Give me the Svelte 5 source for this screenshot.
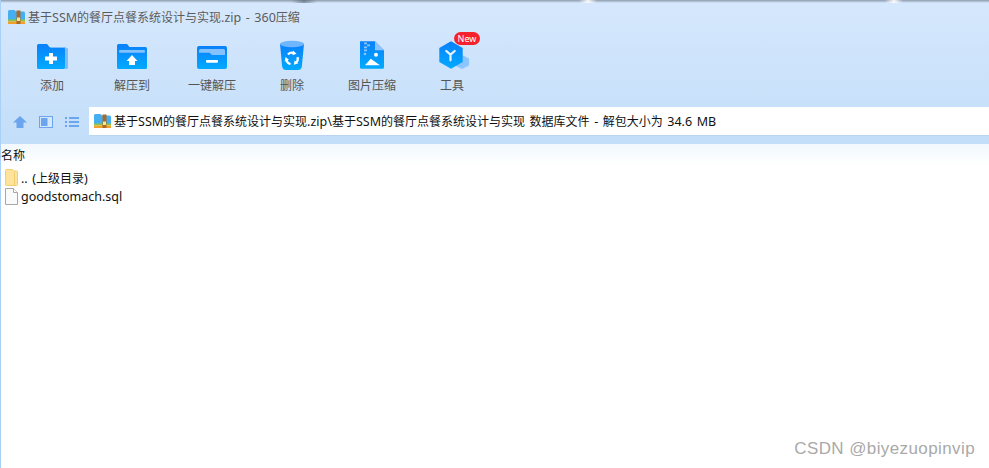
<script>
    const tools = [
        { name: "添加", icon: "add" },
        { name: "解压到", icon: "extract" },
        { name: "一键解压", icon: "onekey" },
        { name: "删除", icon: "trash" },
        { name: "图片压缩", icon: "image" },
        { name: "工具", icon: "tools" }
    ];
    const title = "基于SSM的餐厅点餐系统设计与实现.zip";

    // latin runs are drawn a little larger than the cjk ones
    const runs = (text) => text.split(/([\x00-\x7f]+)/).filter(Boolean);
    const isLatin = (run) => /^[\x00-\x7f]/.test(run);
</script>

{#snippet mixed(text)}
    {#each runs(text) as run}<span class:latin={isLatin(run)}>{run}</span>{/each}
{/snippet}

{#snippet zipIcon()}
    <svg class="zip" width="17" height="14" viewBox="0 0 17 14">
        <path d="M0 1.500a1.500 1.500 0 0 1 1.500-1.500h5l1.500 1.500h7.500a1.500 1.500 0 0 1 1.500 1.500v7h-17z" fill="#45aff2"/>
        <rect x="0" y="9.500" width="17" height="2" fill="#8cc63f"/>
        <rect x="0" y="11.500" width="17" height="2.500" fill="#f2a02c"/>
        <rect x="8.500" y="0.500" width="4" height="13.500" fill="#a8692b"/>
        <rect x="9" y="7.500" width="3" height="3.500" fill="#ffe28a"/>
    </svg>
{/snippet}

{#snippet toolIcon(icon)}
    <svg width="40" height="34" viewBox="0 0 40 34">
        <defs>
            <linearGradient id="blue-{icon}" x1="0" y1="0" x2="0" y2="1">
                <stop offset="0" stop-color="#0a80fb"/>
                <stop offset="1" stop-color="#00aaff"/>
            </linearGradient>
        </defs>
        {#if icon === "add"}
            <path d="M33 8h2a1 1 0 0 1 1 1v18.500a1.500 1.500 0 0 1-1.500 1.500h-1.500z" fill="#7dbdfd"/>
            <path d="M5 5.500a1.500 1.500 0 0 1 1.500-1.500h8.500l2.500 3h15.500v20.500a1.500 1.500 0 0 1-1.500 1.500h-25a1.500 1.500 0 0 1-1.500-1.500z" fill="url(#blue-add)"/>
            <path d="M17.500 7h15.500a1.500 1.500 0 0 1 1.500 1.500h-2v-.5h-14z" fill="#7dbdfd"/>
            <path d="M17 13h4v3.500h4v4h-4v3.500h-4v-3.500h-4v-4h4z" fill="#fff"/>
        {:else if icon === "extract"}
            <path d="M5 5.500a1.500 1.500 0 0 1 1.500-1.500h8.500l2.500 3h16a1.500 1.500 0 0 1 1.500 1.500v19a1.500 1.500 0 0 1-1.500 1.500h-27a1.500 1.500 0 0 1-1.500-1.500z" fill="url(#blue-extract)"/>
            <rect x="7" y="10" width="26" height="2.700" rx="1" fill="#85c1fd"/>
            <path d="M20 15l5.500 6h-2.500v4h-6v-4h-2.500z" fill="#fff"/>
        {:else if icon === "onekey"}
            <rect x="5" y="6" width="30" height="23" rx="2" fill="url(#blue-onekey)"/>
            <path d="M7 10.500a1.500 1.500 0 0 1 1.500-1.500h23a1.500 1.500 0 0 1 1.500 1.500v4.500h-13l-2.500-2.300h-10.500z" fill="#85c1fd"/>
            <rect x="14" y="20" width="12" height="2.700" rx="1" fill="#fff"/>
        {:else if icon === "trash"}
            <path d="M8 4h24l-2.200 23a4 4 0 0 1-3.800 3h-12a4 4 0 0 1-3.800-3z" fill="url(#blue-trash)"/>
            <ellipse cx="20" cy="4" rx="12" ry="3.200" fill="#6fb6fc"/>
            {#each [0, 120, 240] as angle}
                <g transform="rotate({angle} 20 18.500)">
                    <path d="M16 14.500a5 5 0 0 1 5.500-1.500" fill="none" stroke="#fff" stroke-width="2.200"/>
                    <path d="M21 10.500l3.500 3.200-4 1.500z" fill="#fff"/>
                </g>
            {/each}
        {:else if icon === "image"}
            <path d="M9 1.300h14l9 9v17a1.500 1.500 0 0 1-1.500 1.500h-21a1.500 1.500 0 0 1-1.500-1.500v-25a1.500 1.500 0 0 1 1.500-1.500z" fill="url(#blue-image)"/>
            <path d="M23 1.300l9 9h-9z" fill="#8cc5fd"/>
            <path d="M12 2.500h3v1.700h-3zM15 4.500h3v1.700h-3zM12 6.500h3v1.700h-3zM12 9.500h3v1.700h-3z" fill="#8cc5fd"/>
            <circle cx="13" cy="14" r="1.300" fill="#8cc5fd"/>
            <circle cx="24" cy="14.700" r="2" fill="#fff"/>
            <path d="M13 25.300l5.700-6.600 9.300 6.600z" fill="#fff"/>
        {:else}
            <path d="M30 15l7 3.500v7l-7 3.500-7-3.500v-7z" fill="#8cc5fd"/>
            <path d="M19 1.300l11.700 6.800v13.800l-11.700 6.800-11.700-6.800v-13.800z" fill="url(#blue-tools)"/>
            <path d="M18.500 14.700v5.600M18.500 14.700l-4.200-3.700M18.500 14.700l4.200-3.700" fill="none" stroke="#e4f3ff" stroke-width="2.200" stroke-linecap="round"/>
        {/if}
    </svg>
{/snippet}

<div class="window">
    <header class="chrome">
        <div class="topedge"></div>
        <div class="titlebar">
            {@render zipIcon()}
            <span>{@render mixed(`${title} - 360压缩`)}</span>
        </div>
        <div class="toolbar">
            {#each tools as tool}
                <div class="tool">
                    <div class="tool-icon">
                        {@render toolIcon(tool.icon)}
                        {#if tool.icon === "tools"}
                            <span class="badge">New</span>
                        {/if}
                    </div>
                    <span class="tool-name">{tool.name}</span>
                </div>
            {/each}
        </div>
        <div class="navbar">
            <div class="nav-buttons">
                <svg width="14" height="12" viewBox="0 0 14 12">
                    <path d="M7 0l7 6.500h-3.500v5.500h-7v-5.500h-3.500z" fill="#6ba5ef"/>
                </svg>
                <svg width="14" height="12" viewBox="0 0 14 12">
                    <rect x="0.500" y="0.500" width="13" height="11" fill="#d5e7fb" stroke="#6ba5ef"/>
                    <rect x="2" y="2" width="6.500" height="8" fill="#6ba5ef"/>
                </svg>
                <svg width="14" height="10" viewBox="0 0 14 10">
                    <path d="M0 0h2v2h-2zM4 0h10v2h-10zM0 4h2v2h-2zM4 4h10v2h-10zM0 8h2v2h-2zM4 8h10v2h-10z" fill="#6ba5ef"/>
                </svg>
            </div>
            <div class="address">
                {@render zipIcon()}
                <span>{@render mixed(`${title}\\基于SSM的餐厅点餐系统设计与实现 数据库文件 - 解包大小为 34.6 MB`)}</span>
            </div>
        </div>
    </header>

    <main class="files">
        <div class="column-head">名称</div>
        <div class="rows">
            <div class="row">
                <svg width="13" height="17" viewBox="0 0 13 17">
                    <path d="M0.500 1.500a1 1 0 0 1 1-1h6l1.500 1.500h2.500a1 1 0 0 1 1 1v12.500a1 1 0 0 1-1 1h-10a1 1 0 0 1-1-1z" fill="#fde49a" stroke="#f3cf74"/>
                    <path d="M9.500 2.500v14" stroke="#f3cf74"/>
                </svg>
                <span>{@render mixed(".. (上级目录)")}</span>
            </div>
            <div class="row">
                <svg width="13" height="17" viewBox="0 0 13 17">
                    <path d="M0.500 0.500h8l4 4v12h-12z" fill="#fafafa" stroke="#a8a8a8"/>
                    <path d="M8.500 0.500v4h4" fill="#fff" stroke="#a8a8a8"/>
                </svg>
                <span>{@render mixed("goodstomach.sql")}</span>
            </div>
        </div>
    </main>

    <div class="watermark">CSDN @biyezuopinvip</div>
</div>

<style>
    :global(body) {
        margin: 0;
        background: #fff;
    }

    .window {
        position: relative;
        display: flex;
        flex-direction: column;
        height: 468px;
        overflow: hidden;
        border-left: 1px solid #a9d0f7;
        box-sizing: border-box;
        font-family: "Noto Sans", "Noto Sans CJK SC", sans-serif;
        font-size: 12px;
        color: #111;
    }

    .latin {
        font-size: 12.5px;
        word-spacing: 1.3px;
        white-space: pre;
    }

    .chrome {
        height: 144px;
        background: linear-gradient(#d6e8fd, #c3def9);
    }

    .topedge {
        height: 3px;
        background:
            linear-gradient(90deg, transparent 290px, rgba(70, 80, 90, 0.5) 303px, transparent 316px, transparent 578px, rgba(255, 255, 255, 0.9) 587px, transparent 596px, transparent 884px, rgba(255, 255, 255, 0.9) 893px, transparent 902px),
            linear-gradient(#8d9cac, #d6e8fd);
    }

    .titlebar {
        display: flex;
        align-items: center;
        gap: 3px;
        height: 28px;
        padding-left: 7px;
        color: #5c5c5c;
    }

    .zip {
        flex: none;
    }

    .toolbar {
        display: flex;
        height: 67px;
        padding-left: 11px;
    }

    .tool {
        display: flex;
        flex-direction: column;
        align-items: center;
        gap: 4px;
        width: 80px;
        padding-top: 9px;
    }

    .tool-icon {
        position: relative;
        height: 34px;
    }

    .tool-name {
        line-height: 16px;
        color: #555;
    }

    .badge {
        position: absolute;
        top: -8px;
        left: 22px;
        width: 26px;
        height: 13px;
        border-radius: 7px;
        background: #f5222d;
        color: #fff;
        font-size: 9px;
        line-height: 13px;
        text-align: center;
    }

    .navbar {
        display: flex;
        align-items: center;
        height: 29px;
        margin-top: 9px;
    }

    .nav-buttons {
        display: flex;
        align-items: center;
        gap: 12px;
        width: 88px;
        padding-left: 12px;
        box-sizing: border-box;
    }

    .address {
        flex: 1;
        display: flex;
        align-items: center;
        gap: 3px;
        height: 29px;
        box-sizing: border-box;
        padding-left: 5px;
        background: #fff;
        border-bottom: 1px solid #b9d5f0;
        white-space: nowrap;
    }

    .files {
        flex: 1;
        background: linear-gradient(#f2f8fe, #fff 22px);
    }

    .column-head {
        height: 24px;
        line-height: 24px;
    }

    .rows {
        padding-left: 4px;
    }

    .row {
        display: flex;
        align-items: center;
        gap: 3px;
        height: 19px;
    }

    .watermark {
        position: absolute;
        right: 14px;
        bottom: 9px;
        font-family: "Liberation Sans", sans-serif;
        font-size: 17px;
        letter-spacing: 0.4px;
        color: #a9a9a9;
    }
</style>
